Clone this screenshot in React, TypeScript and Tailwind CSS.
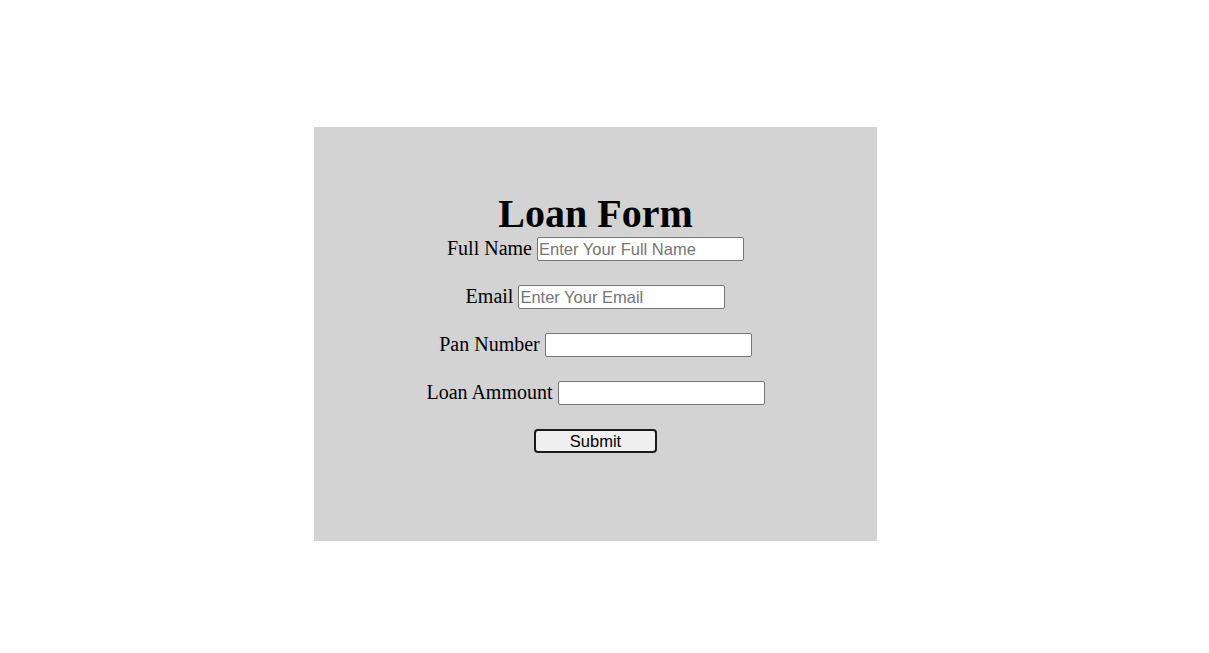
export default function App() {
  const rows = [
    { label: "Full Name", ph: "Enter Your Full Name" },
    { label: "Email", ph: "Enter Your Email" },
    { label: "Pan Number", ph: "" },
    { label: "Loan Ammount", ph: "" },
  ];
  return (
    <div className="w-[1209px] h-[653px] bg-white pt-[127px] pl-[314px]">
      <div
        className="w-[563px] h-[414px] bg-[#d3d3d3] pt-[64px] flex flex-col items-center text-black"
        style={{ fontFamily: '"Liberation Serif", "Times New Roman", serif' }}
      >
        <h1 className="text-[40px] leading-[46px] font-bold m-0">Loan Form</h1>
        <div className="flex flex-col items-center gap-[24px]">
          {rows.map((r) => (
            <div key={r.label} className="flex items-center h-[24px] gap-[5px] text-[20px] leading-[23px]">
              <span className="pb-[2px]">{r.label}</span>
              <input
                type="text"
                placeholder={r.ph}
                className="w-[207px] h-[24px] bg-white border border-[#767676] rounded-[2px] px-[1px] text-[16.5px] text-black placeholder:text-[#757575] outline-none"
                style={{ fontFamily: '"Liberation Sans", Arial, sans-serif' }}
              />
            </div>
          ))}
          <button
            className="w-[123px] h-[24px] bg-[#efefef] border-2 border-[#1a1a1a] rounded-[4px] text-[16.5px] leading-[18px] text-black flex items-center justify-center"
            style={{ fontFamily: '"Liberation Sans", Arial, sans-serif' }}
          >
            Submit
          </button>
        </div>
      </div>
    </div>
  );
}
